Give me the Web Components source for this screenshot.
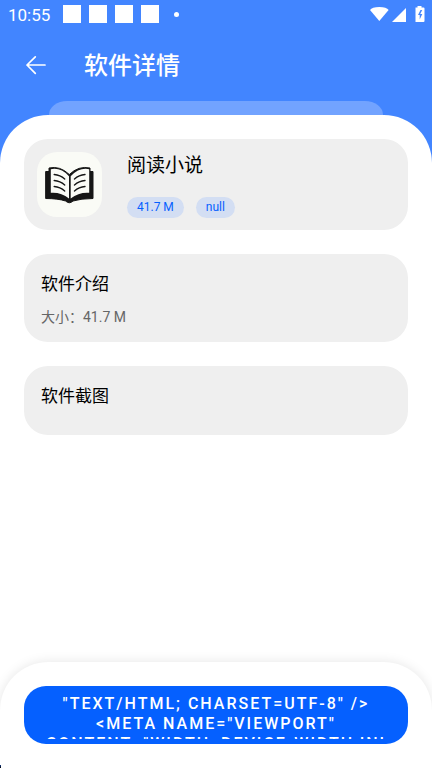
<!DOCTYPE html>
<html lang="zh-CN">
<head>
<meta charset="utf-8">
<meta name="viewport" content="width=device-width, initial-scale=1">
<title>软件详情</title>
<style>
  html, body { margin: 0; height: 100%; }
  body {
    background: #4285ff;
    color: #000;
    font-family: Roboto, "Noto Sans CJK SC", sans-serif;
  }
</style>
</head>
<body>
<detail-page>
  <status-bar slot="top" time="10:55"></status-bar>
  <app-bar slot="top">软件详情</app-bar>
  <app-summary name="阅读小说">
    <tag-chip>41.7 M</tag-chip>
    <tag-chip>null</tag-chip>
  </app-summary>
  <info-card heading="软件介绍"><p>大小：41.7 M</p></info-card>
  <info-card heading="软件截图"></info-card>
  <action-dock slot="bottom">"text/html; charset=UTF-8" /&gt;
&lt;meta name="viewport"
content="width=device-width,ini</action-dock>
</detail-page>

<script>
function define(name, markup, setup) {
  const template = document.createElement('template');
  template.innerHTML = markup;
  customElements.define(name, class extends HTMLElement {
    constructor() {
      super();
      this.attachShadow({ mode: 'open' }).append(template.content.cloneNode(true));
    }
    connectedCallback() { if (setup) setup(this, this.shadowRoot); }
  });
}

define('detail-page', `
  <style>
    :host { display: flex; flex-direction: column; min-height: 100%; }
    .peek { height: 14px; margin: 0 49px; border-radius: 18px 18px 0 0 / 14px 14px 0 0; background: #72a3ff; }
    .sheet { flex: 1; display: flex; flex-direction: column; background: #fff; border-radius: 48px 48px 0 0; }
    main { flex: 1; display: flex; flex-direction: column; gap: 24px; padding: 24px; }
  </style>
  <slot name="top"></slot>
  <div class="peek"></div>
  <div class="sheet">
    <main><slot></slot></main>
    <slot name="bottom"></slot>
  </div>`);

define('status-bar', `
  <style>
    :host { display: flex; align-items: center; height: 30px; padding: 0 7px 0 8px; color: #fff; font-size: 17px; }
    time { line-height: 30px; }
    .notes { display: flex; align-items: center; gap: 8px; flex: 1; margin-left: 13px; padding-bottom: 2px; }
    .notes i { width: 18px; height: 18px; background: #fff; }
    .notes b { width: 5px; height: 5px; margin-left: 7px; border-radius: 50%; background: #fff; }
    svg { display: block; fill: #fff; }
  </style>
  <time></time>
  <div class="notes"><i></i><i></i><i></i><i></i><b></b></div>
  <svg width="55" height="18" viewBox="370 6 55 18" aria-hidden="true">
    <path d="M370 10Q372 7 379.300 7T388.600 10L379.300 21Z"/>
    <path d="M406 8V22H392Z"/>
    <path fill-rule="evenodd" d="M417.500 6h4v1.500h2q1 0 1 1v12.500q0 1-1 1h-8v-14.500h2zM420.500 10l-2.500 5h1.700v4.500l2.600-5.500h-2.100l2-4z"/>
  </svg>`, (el, root) => { root.querySelector('time').textContent = el.getAttribute('time'); });

define('app-bar', `
  <style>
    :host { display: flex; align-items: center; gap: 36px; height: 71px; padding: 0 24px; box-sizing: border-box; color: #fff; }
    button { display: flex; padding: 0; border: 0; background: none; color: inherit; cursor: pointer; }
    h1 { margin: 0; font-size: 24px; line-height: 32px; font-weight: 500; }
  </style>
  <button type="button" aria-label="返回">
    <svg width="24" height="24" viewBox="0 0 24 24" fill="none" stroke="currentColor" stroke-width="1.700" stroke-linecap="round" stroke-linejoin="round"><path d="M11.300 2.800L3 11l8.300 8.300M3 11h18"/></svg>
  </button>
  <h1><slot></slot></h1>`);

define('app-summary', `
  <style>
    :host { display: flex; align-items: flex-start; gap: 25px; padding: 13px 13px 12px; border-radius: 24px; background: #efefef; }
    .icon { flex: none; display: block; border-radius: 20px; background: #fafbf6; }
    h2 { margin: 0; font-size: 19px; line-height: 24px; font-weight: 400; }
    .text { display: flex; flex-direction: column; gap: 19px; padding-top: 2px; }
    .tags { display: flex; gap: 12px; }
  </style>
  <svg class="icon" width="65" height="65" viewBox="0 0 65 65" fill="none" stroke="#161616" stroke-linecap="round" stroke-linejoin="round" aria-hidden="true">
    <path fill="#161616" stroke-width="1" d="M9 19.500h3V16q11-2.500 20.300 6.500 9.200-9 20.700-6.500v3.500h3V46.500q-12 0-20 2.500-3.700 3.500-7.400 0Q21 46.500 9 46.500Z"/>
    <path fill="#fafbf6" stroke="none" d="M13.800 17.200q10-2 18.200 7V46.500Q24 40 13.800 40.800ZM52.200 17.200q-10-2-18.500 7V46.500Q42 40 52.200 40.800Z"/>
    <path stroke-width="1.400" d="M17.200 22.500q6 .500 10.500 4.500M17.200 28.500q6 .500 10.500 4.500M17.200 34.500q6 .500 10.500 4.500M48 22.500q-6 .500-10.500 4.500M48 28.500q-6 .500-10.500 4.500M48 34.500q-6 .500-10.500 4.500"/>
  </svg>
  <div class="text"><h2></h2><div class="tags"><slot></slot></div></div>`,
  (el, root) => { root.querySelector('h2').textContent = el.getAttribute('name'); });

define('tag-chip', `
  <style>
    :host { display: block; padding: 0 10px; border-radius: 11px; background: #d3def3; color: #0560ff; font-size: 12px; line-height: 21px; }
  </style><slot></slot>`);

define('info-card', `
  <style>
    :host { display: block; padding: 18px 17px 13px; border-radius: 24px; background: #efefef; }
    h2 { margin: 0; font-size: 17px; line-height: 24px; font-weight: 400; }
    .body { min-height: 14px; }
    ::slotted(p) { margin: 0; padding-top: 9px; font-size: 14px; line-height: 24px; color: #666; }
  </style>
  <h2></h2><div class="body"><slot></slot></div>`,
  (el, root) => { root.querySelector('h2').textContent = el.getAttribute('heading'); });

define('action-dock', `
  <style>
    :host { display: block; padding: 24px; border-radius: 48px 48px 0 0; background: linear-gradient(#123a8c, #000) left bottom / 1px 3px no-repeat, #fff; box-shadow: 0 0 12px rgba(0, 0, 0, .1); clip-path: inset(-20px 0 0 0); }
    button { display: block; width: 100%; height: 58px; padding: 8px 16px 5px; border: 0; border-radius: 22px; background: #0560ff; color: #fff; font: 500 16px/20px Roboto, "Noto Sans CJK SC", sans-serif; letter-spacing: 2px; text-transform: uppercase; white-space: pre; cursor: pointer; }
    span { display: block; height: 45px; overflow: hidden; }
  </style>
  <button type="button"><span><slot></slot></span></button>`);
</script>
</body>
</html>
